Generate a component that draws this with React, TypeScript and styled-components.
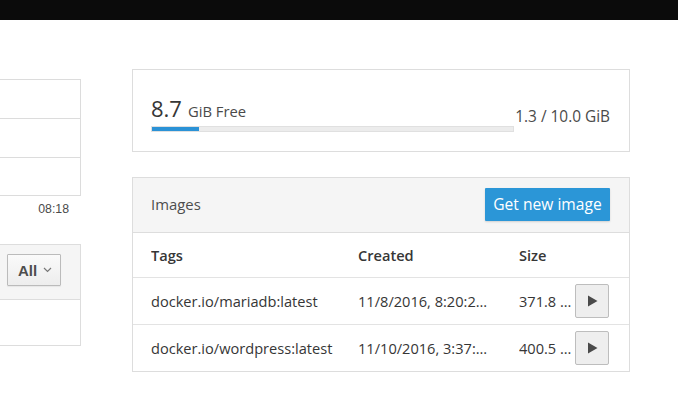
import React from "react";
import styled, { createGlobalStyle } from "styled-components";

const Global = createGlobalStyle`
  html, body { margin: 0; padding: 0; background: #fff; }
  body { font-family: "Open Sans", "Noto Sans", sans-serif; color: #363636; font-size: 14.6px; }
  * { box-sizing: border-box; }
`;

const TopBar = styled.div`
  height: 20px;
  background: #0b0b0b;
`;

const Page = styled.div`
  display: flex;
  align-items: flex-start;
  padding-top: 49px;
`;

const LeftCol = styled.div`
  width: 81px;
  margin-top: 10px;
  display: flex;
  flex-direction: column;
`;

const RightCol = styled.div`
  width: 498px;
  margin-left: 51px;
  display: flex;
  flex-direction: column;
  gap: 25px;
`;

const ChartBox = styled.div`
  height: 117px;
  border: 1px solid #dcdcdc;
  border-left: none;
  display: grid;
  grid-template-rows: repeat(3, 1fr);
`;

const GridRow = styled.div<{ $first?: boolean }>`
  border-top: ${(p) => (p.$first ? "none" : "1px solid #dcdcdc")};
`;

const TimeLabel = styled.div`
  font-family: "Liberation Sans", Arial, sans-serif;
  font-size: 12.3px;
  line-height: 14px;
  color: #4a4a4a;
  text-align: right;
  padding-right: 12px;
  margin-top: 6px;
`;

const Card = styled.div<{ $noLeft?: boolean }>`
  border: 1px solid #dddddd;
  ${(p) => (p.$noLeft ? "border-left: none;" : "")}
  background: #fff;
`;

const LeftCard = styled(Card)`
  margin-top: 28px;
`;

const CardHeader = styled.div<{ $pl?: number }>`
  height: 55px;
  background: #f5f5f5;
  border-bottom: 1px solid #dddddd;
  display: flex;
  align-items: center;
  justify-content: space-between;
  padding: 0 19px 0 ${(p) => p.$pl ?? 18}px;
`;

const LeftHeader = styled(CardHeader)`
  justify-content: flex-end;
  align-items: flex-start;
  padding-top: 9px;
`;

const CardBody = styled.div`
  height: 45px;
`;

const Dropdown = styled.button`
  height: 32px;
  width: 54px;
  flex: none;
  display: inline-flex;
  align-items: center;
  justify-content: center;
  gap: 6px;
  border: 1px solid #bbbbbb;
  border-radius: 1px;
  background: linear-gradient(#fafafa, #ededed);
  box-shadow: 0 1px 1px rgba(0, 0, 0, 0.06);
  font-family: "Liberation Sans", Arial, sans-serif;
  font-weight: 700;
  font-size: 15px;
  color: #4d4d4d;
  padding: 0 0 0 2px;
`;

const StorageBody = styled.div`
  padding: 26px 19px 19px 18px;
  display: flex;
  align-items: center;
  justify-content: space-between;
`;

const UsageBlock = styled.div`
  width: 363px;
`;

const FreeLine = styled.div`
  line-height: 24px;
  height: 24px;
  color: #363636;
`;

const Big = styled.span`
  font-size: 22px;
  font-weight: 400;
`;

const Unit = styled.span`
  font-size: 14.8px;
  margin-left: 6px;
  color: #4a4a4a;
`;

const Track = styled.div`
  margin-top: 6px;
  height: 6px;
  background: #ececec;
  border: 1px solid #e0e0e0;
  overflow: hidden;
`;

const Fill = styled.div`
  height: 100%;
  background: #2b92d6;
`;

const Total = styled.div`
  font-size: 15.4px;
  color: #4a4a4a;
  margin-top: 4px;
`;

const Title = styled.div`
  font-size: 14.9px;
  color: #4d4d4d;
  margin-top: -3px;
`;

const PrimaryButton = styled.button`
  height: 33px;
  width: 125px;
  border: none;
  border-radius: 1px;
  background: #2b96d7;
  color: #fff;
  font-family: "Open Sans", "Noto Sans", sans-serif;
  font-size: 15.6px;
  box-shadow: 0 1px 2px rgba(0, 0, 0, 0.15);
  padding: 0;
  margin-top: -2px;
`;

const Row = styled.div<{ $head?: boolean; $last?: boolean }>`
  display: grid;
  grid-template-columns: 207px 161px 56px 34px;
  align-items: center;
  height: ${(p) => (p.$head ? 45 : p.$last ? 46 : 47)}px;
  padding: 0 19px 0 18px;
  border-bottom: ${(p) => (p.$last ? "none" : "1px solid #e3e3e3")};
  font-weight: ${(p) => (p.$head ? 600 : 400)};
  color: #363636;
`;

const Cell = styled.div<{ $pr?: number }>`
  white-space: nowrap;
  overflow: hidden;
  text-overflow: ellipsis;
  padding-right: ${(p) => p.$pr ?? 0}px;
`;

const PlayButton = styled.button`
  width: 34px;
  height: 34px;
  border: 1px solid #bdbdbd;
  border-radius: 2px;
  background: #eeeeee;
  display: flex;
  align-items: center;
  justify-content: center;
  padding: 0;
`;

const Play = () => (
  <svg width="11" height="12" viewBox="0 0 11 12">
    <path d="M1 0.5 L10.5 6 L1 11.5 Z" fill="#4a4a4a" />
  </svg>
);

const Chevron = () => (
  <svg width="9" height="6" viewBox="0 0 9 6">
    <path d="M1 1 L4.5 4.5 L8 1" stroke="#777" strokeWidth="1.2" fill="none" />
  </svg>
);

const images = [
  { tag: "docker.io/mariadb:latest", created: "11/8/2016, 8:20:23 PM", size: "371.8 MiB" },
  { tag: "docker.io/wordpress:latest", created: "11/10/2016, 3:37:12 PM", size: "400.5 MiB" },
];

export default function App() {
  const used = 1.3;
  const total = 10.0;
  return (
    <>
      <Global />
      <TopBar />
      <Page>
        <LeftCol>
          <ChartBox>
            <GridRow $first />
            <GridRow />
            <GridRow />
          </ChartBox>
          <TimeLabel>08:18</TimeLabel>
          <LeftCard $noLeft>
            <LeftHeader $pl={0}>
              <Dropdown>
                All <Chevron />
              </Dropdown>
            </LeftHeader>
            <CardBody />
          </LeftCard>
        </LeftCol>
        <RightCol>
          <Card>
            <StorageBody>
              <UsageBlock>
                <FreeLine>
                  <Big>8.7</Big>
                  <Unit>GiB Free</Unit>
                </FreeLine>
                <Track>
                  <Fill style={{ width: `${(used / total) * 100}%` }} />
                </Track>
              </UsageBlock>
              <Total>1.3 / 10.0 GiB</Total>
            </StorageBody>
          </Card>
          <Card>
            <CardHeader>
              <Title>Images</Title>
              <PrimaryButton>Get new image</PrimaryButton>
            </CardHeader>
            <Row $head>
              <Cell>Tags</Cell>
              <Cell>Created</Cell>
              <Cell>Size</Cell>
              <span />
            </Row>
            {images.map((img, i) => (
              <Row key={img.tag} $last={i === images.length - 1}>
                <Cell>{img.tag}</Cell>
                <Cell $pr={29}>{img.created}</Cell>
                <Cell $pr={2}>{img.size}</Cell>
                <PlayButton>
                  <Play />
                </PlayButton>
              </Row>
            ))}
          </Card>
        </RightCol>
      </Page>
    </>
  );
}
